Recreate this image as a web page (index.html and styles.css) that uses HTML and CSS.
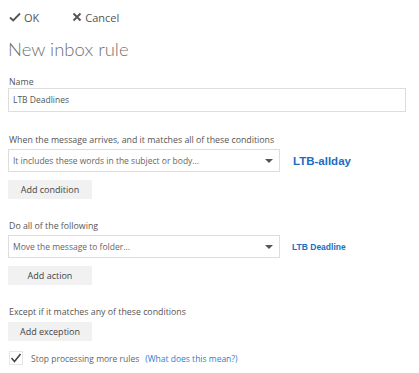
FILE: index.html
```html
<!DOCTYPE html>
<html lang="en">
<head>
    <meta charset="UTF-8">
    <meta name="viewport" content="width=device-width, initial-scale=1.0">
    <title>New inbox rule</title>
    <link rel="stylesheet" href="styles.css">
</head>
<body>
    <div class="panel">
        <div class="toolbar">
            <span class="tool">
                <svg width="12" height="10" viewBox="0 0 12 10"><path d="M1 5.5 L4.2 8.5 L11 1.5" fill="none" stroke="#555" stroke-width="1.8"/></svg>
                OK
            </span>
            <span class="tool">
                <svg width="10" height="10" viewBox="0 0 10 10"><path d="M1.5 1.5 L8.5 8.5 M8.5 1.5 L1.5 8.5" fill="none" stroke="#555" stroke-width="1.9"/></svg>
                Cancel
            </span>
        </div>

        <h1>New inbox rule</h1>

        <div class="label name-label">Name</div>
        <div class="field">LTB Deadlines</div>

        <div class="label section first">When the message arrives, and it matches all of these conditions</div>
        <div class="row">
            <div class="select">
                <span>It includes these words in the subject or body...</span>
                <span class="arrow"></span>
            </div>
            <span class="tag big">LTB-allday</span>
        </div>
        <div class="button">Add condition</div>

        <div class="label section">Do all of the following</div>
        <div class="row">
            <div class="select">
                <span>Move the message to folder...</span>
                <span class="arrow"></span>
            </div>
            <span class="tag small">LTB Deadline</span>
        </div>
        <div class="button">Add action</div>

        <div class="label section">Except if it matches any of these conditions</div>
        <div class="button except-btn">Add exception</div>

        <div class="check-row">
            <span class="checkbox">
                <svg width="12" height="10" viewBox="0 0 12 10"><path d="M1.5 5 L4.5 8.5 L10.5 1" fill="none" stroke="#444" stroke-width="1.6"/></svg>
            </span>
            <span>Stop processing more rules</span>
            <span class="link">(What does this mean?)</span>
        </div>
    </div>
</body>
</html>
```

FILE: styles.css
```css
body {
    margin: 0;
    padding: 0;
    background: #fff;
    font-family: "Open Sans", "Segoe UI", sans-serif;
    color: #555;
}
.panel {
    width: 398px;
    padding: 0 8px;
}
.toolbar {
    display: flex;
    gap: 33px;
    height: 34px;
    align-items: center;
    padding-left: 1px;
    font-size: 11px;
    color: #555;
}
.tool {
    display: flex;
    align-items: center;
    gap: 3px;
}
h1 {
    margin: 1px 0 0;
    font-family: Lato, "Open Sans", sans-serif;
    font-size: 18.5px;
    font-weight: 300;
    color: #707070;
    line-height: 28px;
}
.label {
    font-size: 8.8px;
    color: #555;
    line-height: 12px;
    padding-left: 1px;
}
.name-label {
    margin-top: 13px;
}
.section {
    margin-top: 21px;
}
.section.first {
    margin-top: 22px;
}
.field {
    margin-top: 0;
    height: 22px;
    border: 1px solid #ddd;
    padding-left: 4px;
    font-size: 8.5px;
    line-height: 22px;
    color: #555;
}
.row {
    display: flex;
    align-items: center;
    margin-top: 3px;
}
.select {
    width: 262px;
    height: 21px;
    border: 1px solid #ddd;
    padding: 0 4px;
    display: flex;
    align-items: center;
    justify-content: space-between;
    font-size: 8.5px;
    color: #666;
}
.arrow {
    width: 0;
    height: 0;
    border-left: 4px solid transparent;
    border-right: 4px solid transparent;
    border-top: 4px solid #555;
    margin-right: 2px;
}
.tag {
    font-weight: bold;
    color: #1a6dc2;
    font-family: "Liberation Sans", Arial, sans-serif;
}
.tag.big {
    margin-left: 13px;
    font-size: 11.5px;
}
.tag.small {
    margin-left: 12px;
    font-size: 8.5px;
}
.button {
    margin-top: 8px;
    width: 84px;
    height: 19px;
    background: #f1f1f1;
    font-size: 9px;
    color: #444;
    display: flex;
    align-items: center;
    justify-content: center;
}
.except-btn {
    margin-top: 4px;
}
.check-row {
    margin-top: 10px;
    display: flex;
    align-items: center;
    gap: 6px;
    font-size: 8.5px;
    color: #666;
    padding-left: 1px;
}
.checkbox {
    width: 12px;
    height: 12px;
    border: 1px solid #e6e6e6;
    display: flex;
    align-items: center;
    justify-content: center;
    margin-right: 2px;
}
.link {
    color: #2a7fd4;
}
```
